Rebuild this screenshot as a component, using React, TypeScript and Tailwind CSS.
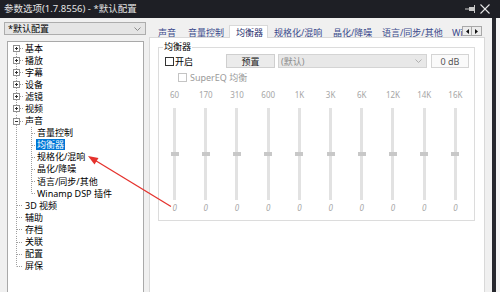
import React from 'react';

type Row = { t: string; l: 1 | 2; box?: '+' | '-'; sel?: boolean; first?: boolean; last?: boolean };

const rows: Row[] = [
  { t: '基本', l: 1, box: '+', first: true },
  { t: '播放', l: 1, box: '+' },
  { t: '字幕', l: 1, box: '+' },
  { t: '设备', l: 1, box: '+' },
  { t: '滤镜', l: 1, box: '+' },
  { t: '视频', l: 1, box: '+' },
  { t: '声音', l: 1, box: '-' },
  { t: '音量控制', l: 2 },
  { t: '均衡器', l: 2, sel: true },
  { t: '规格化/混响', l: 2 },
  { t: '晶化/降噪', l: 2 },
  { t: '语言/同步/其他', l: 2 },
  { t: 'Winamp DSP 插件', l: 2, last: true },
  { t: '3D 视频', l: 1 },
  { t: '辅助', l: 1 },
  { t: '存档', l: 1 },
  { t: '关联', l: 1 },
  { t: '配置', l: 1 },
  { t: '屏保', l: 1, last: true },
];

const H = 12.1;

function Conn({ r }: { r: Row }) {
  const w = r.l === 1 ? 16 : 28;
  const cy = 6.5;
  const dot = { stroke: '#a0a0a0', strokeWidth: 1, strokeDasharray: '1 1' };
  return (
    <svg width={w} height={H} className="block shrink-0">
      <line x1={8.5} x2={8.5} y1={r.first ? cy : 0} y2={r.l === 1 && r.last ? cy : H} {...dot} />
      {r.l === 1 && <line x1={r.box ? 12 : 9} x2={15} y1={cy} y2={cy} {...dot} />}
      {r.l === 2 && (
        <>
          <line x1={23.5} x2={23.5} y1={0} y2={r.last ? cy : H} {...dot} />
          <line x1={24} x2={28} y1={cy} y2={cy} {...dot} />
        </>
      )}
      {r.box && (
        <>
          <rect x={5.5} y={3.5} width={6} height={6} fill="white" stroke="#8f8f8f" />
          <line x1={7} x2={10} y1={cy} y2={cy} stroke="#333" />
          {r.box === '+' && <line x1={8.5} x2={8.5} y1={5} y2={8} stroke="#333" />}
        </>
      )}
    </svg>
  );
}

const freqs = ['60', '170', '310', '600', '1K', '3K', '6K', '12K', '14K', '16K'];
const tabs: { t: string; w: string; active?: boolean }[] = [
  { t: '声音', w: 'w-[30px]' },
  { t: '音量控制', w: 'w-[47px]' },
  { t: '均衡器', w: 'w-[39px]', active: true },
  { t: '规格化/混响', w: 'w-[59px]' },
  { t: '晶化/降噪', w: 'w-[49px]' },
  { t: '语言/同步/其他', w: 'w-[70px]' },
  { t: 'Winamp', w: 'w-[60px]' },
];

export default function App() {
  return (
    <div className="relative w-[500px] h-[292px] overflow-hidden bg-[#f0f0f0] flex flex-col font-['Noto_Sans','Noto_Sans_CJK_SC',sans-serif] text-[9px] leading-none text-black">
      {/* title bar */}
      <div className="h-[18px] shrink-0 bg-[#1e1f25] flex items-center pl-[4px] pr-[10px] text-[#e4e4e4] text-[9.5px]">
        <span>参数选项(1.7.8556) - *默认配置</span>
        <div className="flex-1" />
        <svg width="11" height="8" className="block mr-[4px]">
          <line x1="0" y1="4" x2="4" y2="4" stroke="#c8c8c8" />
          <rect x="4" y="2" width="5" height="4" fill="#c8c8c8" />
          <line x1="9.5" y1="0" x2="9.5" y2="8" stroke="#c8c8c8" />
        </svg>
        <svg width="10" height="10" className="block">
          <line x1="0.5" y1="0.5" x2="9.5" y2="9.5" stroke="#e6e6e6" strokeWidth="1.1" />
          <line x1="9.5" y1="0.5" x2="0.5" y2="9.5" stroke="#e6e6e6" strokeWidth="1.1" />
        </svg>
      </div>

      <div className="flex flex-1 min-h-0">
        {/* left column */}
        <div className="w-[149px] shrink-0 flex flex-col pt-[4px] pl-[4px]">
          <div className="w-[142px] h-[13px] bg-[#e5e5e5] border border-[#adadad] flex items-center pl-[3px] pr-[4px]">
            <span>*默认配置</span>
            <div className="flex-1" />
            <svg width="7" height="4" className="block">
              <polyline points="0.5,0.5 3.5,3.5 6.5,0.5" fill="none" stroke="#8a8a8a" />
            </svg>
          </div>
          <div className="mt-[6px] ml-[3px] w-[137px] flex-1 bg-white border border-[#a9a9a9] border-b-0">
            {rows.map((r) => (
              <div key={r.t} className="flex items-center h-[12.1px]">
                <Conn r={r} />
                <span
                  className={
                    r.sel
                      ? 'bg-[#0078d7] text-white px-[1px] h-[11px] flex items-center'
                      : 'px-[1px] whitespace-nowrap'
                  }
                >
                  {r.t}
                </span>
              </div>
            ))}
          </div>
        </div>

        {/* right column */}
        <div className="w-[343px] shrink-0 flex flex-col pt-[7px]">
          <div className="relative z-10 flex h-[13px]">
            <div className="w-[313px] overflow-hidden flex pl-[3px]">
              {tabs.map((tb) => (
                <div
                  key={tb.t}
                  className={
                    'shrink-0 h-[13px] flex items-center pl-[6px] whitespace-nowrap ' +
                    tb.w +
                    (tb.active
                      ? ' bg-white border border-[#d9d9d9] border-b-0 text-[#1f2f6e]'
                      : ' text-[#3a4a8c] pt-[1px]')
                  }
                >
                  {tb.t}
                </div>
              ))}
            </div>
            <div className="flex mt-[1px]">
              <div className="w-[10px] h-[10px] bg-[#ececec] border border-[#a8a8a8] flex items-center justify-center">
                <svg width="3" height="5" className="block">
                  <polygon points="3,0 3,5 0,2.5" fill="#111" />
                </svg>
              </div>
              <div className="w-[10px] h-[10px] bg-[#ececec] border border-[#a8a8a8] border-l-0 flex items-center justify-center">
                <svg width="3" height="5" className="block">
                  <polygon points="0,0 0,5 3,2.5" fill="#111" />
                </svg>
              </div>
            </div>
          </div>

          <div className="-mt-[1px] w-[336px] flex-1 bg-white border border-[#d9d9d9] border-b-0 pl-[8px] pt-[3px]">
            <fieldset className="w-[317px] border border-[#dcdcdc] pb-[6px]">
              <legend className="ml-[4px] px-[1px] text-[9px] leading-[12px]">均衡器</legend>
              {/* row 1 */}
              <div className="flex items-center h-[14px] pl-[6px] mt-[1px]">
                <div className="w-[61px] flex items-center">
                  <div className="w-[9px] h-[9px] border border-[#333] bg-white" />
                  <span className="ml-[1px]">开启</span>
                </div>
                <div className="w-[49px] h-[14px] bg-[#ebebeb] border border-[#cfcfcf] flex items-center justify-center text-[#222]">
                  预置
                </div>
                <div className="ml-[3px] w-[149px] h-[14px] bg-[#e8e8e8] border border-[#d4d4d4] flex items-center pl-[2px] pr-[4px] text-[#8c8c8c]">
                  <span>(默认)</span>
                  <div className="flex-1" />
                  <svg width="7" height="4" className="block">
                    <polyline points="0.5,0.5 3.5,3.5 6.5,0.5" fill="none" stroke="#b0b0b0" />
                  </svg>
                </div>
                <div className="ml-[4px] w-[38px] h-[14px] bg-[#fafafa] border border-[#d4d4d4] flex items-center justify-center text-[#555]">
                  0 dB
                </div>
              </div>
              {/* row 2 */}
              <div className="flex items-center h-[12px] mt-[3px] pl-[19px] text-[#9a9a9a]">
                <div className="w-[9px] h-[9px] border border-[#c4c4c4] bg-white" />
                <span className="ml-[3px]">SuperEQ 均衡</span>
              </div>
              {/* sliders */}
              <div className="grid grid-cols-10 w-[312px] mt-[6px] text-[#a6a6a6] text-[8px]">
                {freqs.map((f) => (
                  <div key={f} className="flex flex-col items-center">
                    <div className="h-[12px] flex items-center">{f}</div>
                    <div className="mt-[7px] w-[3px] h-[44px] bg-[#e2e2e2]" />
                    <div className="w-[8px] h-[4px] bg-[#c8c8c8]" />
                    <div className="w-[3px] h-[44px] bg-[#e2e2e2]" />
                    <div className="mt-[2px] h-[12px] flex items-center italic">0</div>
                  </div>
                ))}
              </div>
            </fieldset>
          </div>
        </div>

        {/* window edge */}
        <div className="w-[4px] shrink-0 bg-[#26272d]" />
        <div className="flex-1 bg-[#f4f4f4]" />
      </div>

      {/* annotation arrow */}
      <svg width="500" height="292" className="absolute left-0 top-0 pointer-events-none">
        <line x1="171" y1="206.5" x2="95" y2="160.3" stroke="#e5322d" strokeWidth="1.3" />
        <polygon points="88,156 98.5,158 94.5,164.5" fill="#e5322d" />
      </svg>
    </div>
  );
}
